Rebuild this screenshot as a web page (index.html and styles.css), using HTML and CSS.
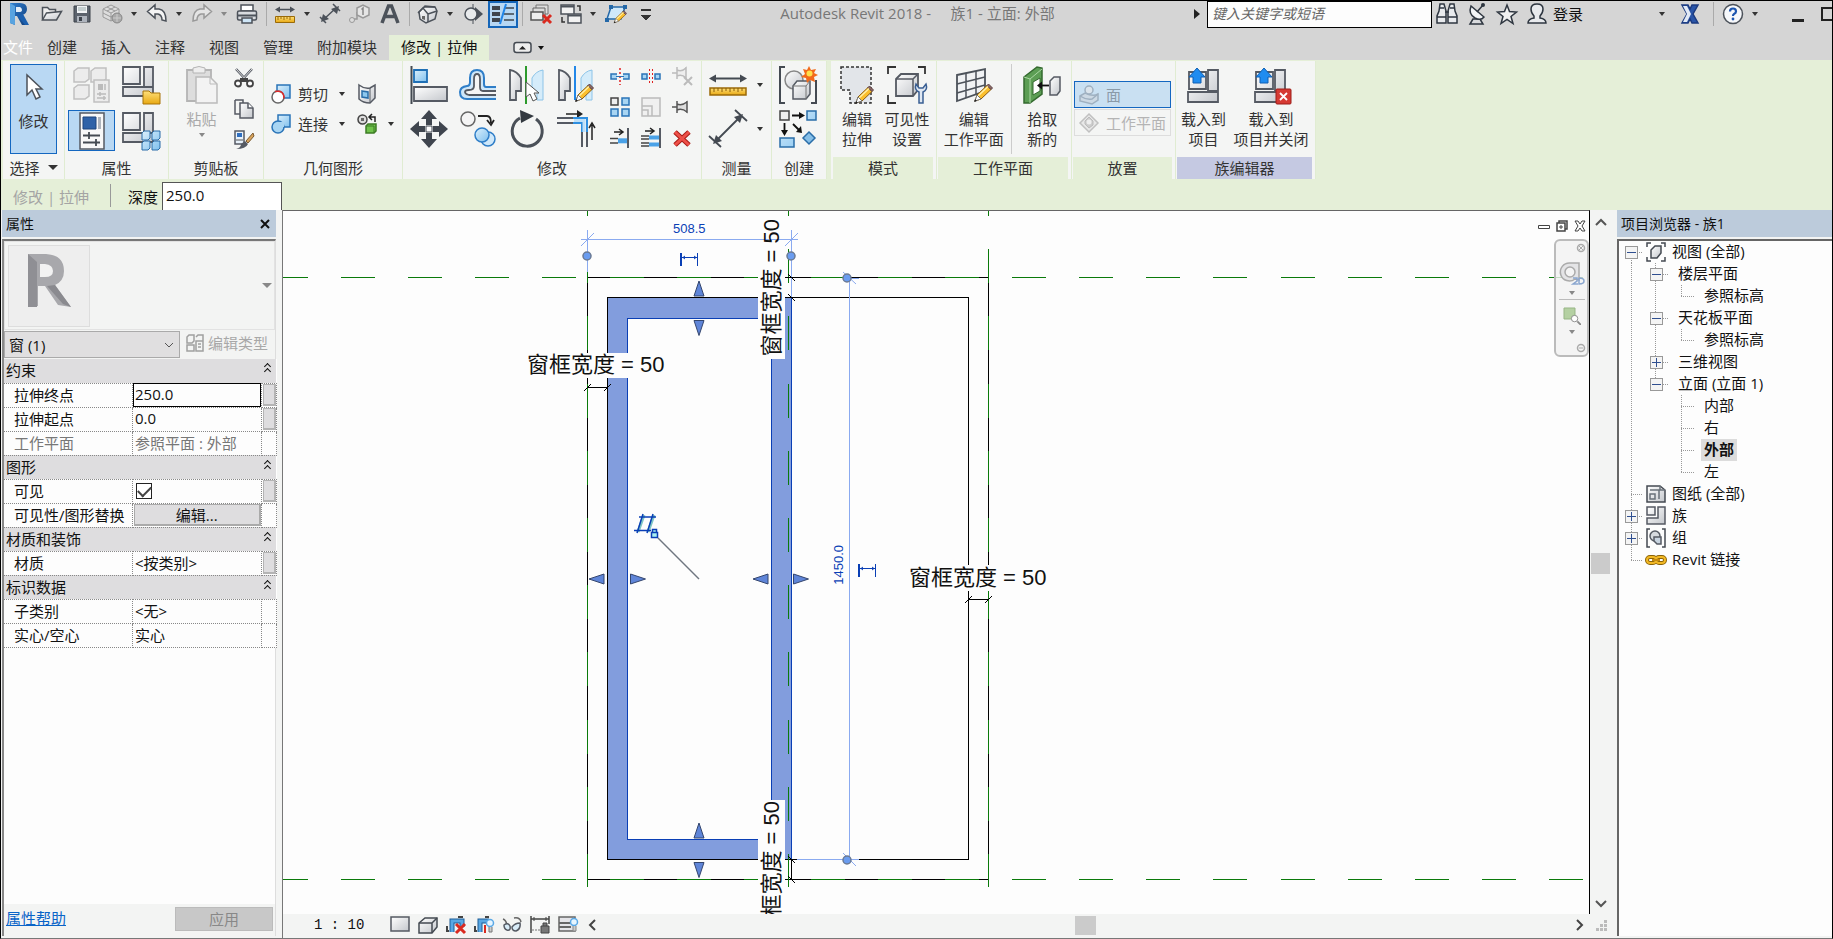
FILE: index.html
```html
<!DOCTYPE html>
<html lang="zh-CN">
<head>
<meta charset="utf-8">
<title>Autodesk Revit 2018 - 族1 - 立面: 外部</title>
<link rel="stylesheet" href="styles.css">
</head>
<body>
<svg class="defs" aria-hidden="true">
  <defs>
    <linearGradient id="metal" x1="0" y1="0" x2="1" y2="1"><stop offset="0" stop-color="#fff"/><stop offset="1" stop-color="#c4c7cc"/></linearGradient>
    <linearGradient id="sky" x1="0" y1="0" x2="1" y2="1"><stop offset="0" stop-color="#dcf0fc"/><stop offset="1" stop-color="#7fc0ee"/></linearGradient>
    <linearGradient id="gold" x1="0" y1="0" x2="0" y2="1"><stop offset="0" stop-color="#ffe07a"/><stop offset="1" stop-color="#e8a812"/></linearGradient>
    <linearGradient id="brand" x1="0" y1="0" x2="1" y2="1"><stop offset="0" stop-color="#2f7fd0"/><stop offset="1" stop-color="#123f7c"/></linearGradient>
    <symbol id="pencil" viewBox="0 0 20 20"><path d="M2 18l2-6L14 2.500l4 4L8 16z" fill="#fbbf2d" stroke="#8a5a10"/><path d="M14 2.500l1.500-1.500 4 4L18 6.500z" fill="#8d6a6a" stroke="#5b4040"/><path d="M5 13l10-9.500" stroke="#fff0a8" stroke-width="1.500"/><path d="M2 18l2-6 4 4z" fill="#fff" stroke="#777"/><path d="M1 19l3-1-2-2z" fill="#222"/></symbol>
    <symbol id="glass" viewBox="0 0 12 12"><circle cx="5" cy="5" r="3.500" fill="#fff" stroke="#888"/><path d="M8 8l4 4" stroke="#888" stroke-width="2"/></symbol>
  </defs>
</svg>

<header class="titlebar">
  <div class="quick">
    <button class="app" aria-label="Revit"><svg width="22" height="24" viewBox="0 0 22 24"><path d="M2 1h10q7 0 7 6 0 5-5 6l5 10h-5L9 14H7v9l-5-2z" fill="url(#brand)"/><path d="M2 1l5 3v19l-5-2z" fill="#58a3e0"/><path d="M8 5h4q2 1 2 3t-3 2H8z" fill="#e4eef8"/><path d="M9 13l8 10h4l-6-11z" fill="#1b5fae"/></svg></button>
    <button aria-label="打开"><svg width="22" height="22" viewBox="0 0 22 22"><path d="M1.500 17V4.500h5l2 2h6v3" fill="#eee" stroke="#4c525a" stroke-width="1.500"/><path d="M1.500 17l4-7 15-1.500-5 8.500z" fill="url(#metal)" stroke="#4c525a" stroke-width="1.500"/></svg></button>
    <button aria-label="保存"><svg width="22" height="22" viewBox="0 0 22 22"><path d="M3 3h16v16H3z" fill="#5b626c" stroke="#3d434b"/><path d="M6 3h10v7H6z" fill="#f2f4f6"/><path d="M7 5h8M7 7h8" stroke="#9aa"/><path d="M6 13h10v6H6z" fill="#aeb4bd"/><path d="M8 14h3v4H8z" fill="#3d434b"/></svg></button>
    <button aria-label="同步"><svg width="24" height="22" viewBox="0 0 24 22"><g fill="#ddd" stroke="#999"><path d="M3 6l8-4 8 4v8l-8 4-8-4z"/><path d="M3 6l8 4 8-4M11 10v8M7 4l8 4M15 4L7 8M3 10l8 4 8-4"/></g><circle cx="17" cy="15" r="5" fill="#aaa" stroke="#888"/><path d="M13 15h8M17 11v8" stroke="#ccc"/></svg></button>
    <i class="caret"></i>
    <button aria-label="放弃"><svg width="22" height="22" viewBox="0 0 22 22"><path d="M1.500 8.500L9 2v4h4q7 1 7 12l-4-1q0-5-4-6H9v4z" fill="#f4f4f4" stroke="#4c525a" stroke-width="1.500"/></svg></button>
    <i class="caret"></i>
    <button aria-label="重做"><svg width="22" height="22" viewBox="0 0 22 22"><path d="M20.500 8.500L13 2v4H9q-7 1-7 12l4-1q0-5 4-6h3v4z" fill="#e4e4e4" stroke="#999" stroke-width="1.500"/></svg></button>
    <i class="caret dim"></i>
    <button aria-label="打印"><svg width="22" height="22" viewBox="0 0 22 22"><path d="M5 2h12v6H5z" fill="#fff" stroke="#4c525a" stroke-width="1.500"/><rect x="1.500" y="8" width="19" height="9" rx="1.500" fill="#d8dbdf" stroke="#4c525a" stroke-width="1.500"/><path d="M2 12.500h18" stroke="#4c525a" stroke-width="2"/><path d="M6 15h10v5H6z" fill="#cfe6f7" stroke="#4c525a" stroke-width="1.500"/></svg></button>
    <i class="rule"></i>
    <button aria-label="测量"><svg width="22" height="22" viewBox="0 0 22 22"><path d="M3 6.500h16" stroke="#4c525a" stroke-width="1.500"/><path d="M1 6.500l5-3v6zM21 6.500l-5-3v6z" fill="#4c525a"/><path d="M1.500 13.500h19v6h-19z" fill="url(#gold)" stroke="#9a6a08"/><path d="M4 14v3m3-3v2m3-2v3m3-3v2m3-2v3" stroke="#9a6a08"/></svg></button>
    <i class="caret"></i>
    <button aria-label="对齐尺寸标注"><svg width="22" height="22" viewBox="0 0 22 22"><path d="M4 17L17 5M1 14l6 6M14 1l7 7" stroke="#4c525a" stroke-width="1.500"/><path d="M2 19l2-8 6 5zM20 3l-2 8-6-5z" fill="#4c525a"/></svg></button>
    <button aria-label="标记"><svg width="22" height="22" viewBox="0 0 22 22"><path d="M8 9v7H3" fill="none" stroke="#999" stroke-width="1.500"/><path d="M8 5l6-3 6 3v7l-6 3-6-3z" fill="#e6e6e6" stroke="#999" stroke-width="1.500"/><path d="M12.500 6.500L14 5v7" stroke="#888" stroke-width="1.500" fill="none"/><circle cx="3" cy="17" r="2.500" fill="#ddd" stroke="#999"/></svg></button>
    <button aria-label="文字"><svg width="22" height="22" viewBox="0 0 22 22"><path d="M3 20L9.500 3h3L19 20M6 13.500h10" fill="none" stroke="#4c525a" stroke-width="3.500"/></svg></button>
    <i class="rule"></i>
    <button aria-label="默认三维视图"><svg width="22" height="22" viewBox="0 0 22 22"><path d="M2 9l6-6 10 1 2 4-2 8-9 4-6-4z" fill="url(#metal)" stroke="#4c525a" stroke-width="1.500"/><path d="M1 10l5-5 5 6M11 11v8M11 11l9-3M7 4l11 0" fill="none" stroke="#4c525a" stroke-width="1.500"/><path d="M5 13h3v4l-3-1z" fill="#666"/></svg></button>
    <i class="caret"></i>
    <button aria-label="剖面"><svg width="22" height="22" viewBox="0 0 22 22"><path d="M13 4l8 7-8 7z" fill="#4c525a"/><path d="M11 1v20" stroke="#4c525a"/><circle cx="9" cy="11" r="6" fill="#e8eaec" stroke="#4c525a" stroke-width="1.500"/></svg></button>
    <button class="on" aria-label="细线" aria-pressed="true"><svg width="24" height="22" viewBox="0 0 24 22"><path d="M1 5h8M1 11h8M1 17h8" stroke="#3f454e" stroke-width="4"/><path d="M13 5h10M13 11h10M13 17h10" stroke="#3f454e" stroke-width="1.500"/><path d="M15 1L9 21" stroke="#1f84e8" stroke-width="2"/></svg></button>
    <i class="rule"></i>
    <button aria-label="关闭隐藏窗口"><svg width="22" height="22" viewBox="0 0 22 22"><path d="M6 2h12v9H6z" fill="#ddd" stroke="#777"/><path d="M3 5h12v9H3z" fill="#ddd" stroke="#666"/><path d="M1 9h12v8H1z" fill="#eee" stroke="#555" stroke-width="1.500"/><path d="M13 12l8 8m0-8l-8 8" stroke="#d92a20" stroke-width="3"/></svg></button>
    <button aria-label="切换窗口"><svg width="22" height="22" viewBox="0 0 22 22"><path d="M1 2h13v9H1zM8 11h13v9H8z" fill="#f2f2f2" stroke="#4c525a" stroke-width="1.500"/><path d="M1 3.500h13M8 12.500h13" stroke="#4c525a" stroke-width="2"/><path d="M17 3h3v5M5 19H2v-5" fill="none" stroke="#333" stroke-width="1.500"/></svg></button>
    <i class="caret"></i>
    <button aria-label="编辑边界"><svg width="22" height="22" viewBox="0 0 22 22"><path d="M6 4h14l-4 12H2z" fill="#cfe8fa" stroke="#2468a8" stroke-width="1.500"/><path d="M4 2h4v4H4zM18 2h4v4h-4zM0 15h4v4H0z" fill="#2468a8"/><use href="#pencil" x="8" y="7" width="14" height="14"/></svg></button>
    <button class="more" aria-label="自定义快速访问工具栏"></button>
  </div>
  <h1>Autodesk Revit 2018 - &nbsp;&nbsp;&nbsp; 族1 - 立面: 外部</h1>
  <div class="infocenter">
    <i class="play"></i>
    <input class="search" type="text" aria-label="搜索" placeholder="键入关键字或短语">
    <button aria-label="搜索"><svg width="22" height="24" viewBox="0 0 22 24"><path d="M3 9l1-7h4l2 7v12H1v-7zM19 9l-1-7h-4l-2 7v12h9v-7z" fill="#e8eaed" stroke="#2e3640" stroke-width="1.500"/><path d="M1 15h9M12 15h9M9 10h4M3 6h5M14 6h5" stroke="#2e3640" stroke-width="1.500"/></svg></button>
    <button aria-label="通讯中心"><svg width="18" height="24" viewBox="0 0 18 24"><path d="M5 17l-3 5h13l-3-5z" fill="#d8dadd" stroke="#2e3640" stroke-width="1.500"/><path d="M3 4q-3 8 4 12 6 3 9-1z" fill="#f2f4f6" stroke="#2e3640" stroke-width="1.500"/><path d="M9 10l6-7" stroke="#2e3640" stroke-width="1.500"/><circle cx="15" cy="3" r="2" fill="#2e3640"/></svg></button>
    <button aria-label="收藏夹"><svg width="22" height="22" viewBox="0 0 22 22"><path d="M11 2l2.500 6.500 7 .5-5.500 4.500 2 7L11 16.500 5 20.500l2-7L1.500 9l7-.5z" fill="#f0f0f0" stroke="#2e3640" stroke-width="1.500"/></svg></button>
    <button class="login"><svg width="22" height="24" viewBox="0 0 22 24"><path d="M2 21q0-4 6-5v-2Q5 11 5 7q0-5 6-5t6 5q0 4-3 7v2q6 1 6 5z" fill="#e8eaed" stroke="#2e3640" stroke-width="1.500"/></svg>登录</button>
    <i class="caret"></i>
    <button class="exchange" aria-label="Exchange"><svg width="20" height="22" viewBox="0 0 20 22"><path d="M18 2h-6l-2 4-2-4H2l5 9-5 9h6l2-4 2 4h6l-5-9z" fill="#2a55a8" stroke="#1c3b80" stroke-width="1.500"/><path d="M3 3h4l4 8-4 8H3l4-8z" fill="#e2eaf6"/></svg></button>
    <i class="rule"></i>
    <button aria-label="帮助"><svg width="22" height="22" viewBox="0 0 22 22"><circle cx="11" cy="11" r="9.500" fill="#f6f8fb" stroke="#4c525a" stroke-width="1.500"/><path d="M8 8.500q0-3 3-3t3 3q0 1.500-2 2.500-1 .5-1 2" fill="none" stroke="#1c55b0" stroke-width="2.200"/><circle cx="11" cy="16" r="1.400" fill="#1c55b0"/></svg></button>
    <i class="caret"></i>
    <button class="winmin" aria-label="最小化"></button>
    <button class="winmax" aria-label="最大化"></button>
  </div>
</header>

<nav class="tabs">
  <button class="file">文件</button>
  <button>创建</button><button>插入</button><button>注释</button><button>视图</button><button>管理</button><button>附加模块</button>
  <button class="active">修改 | 拉伸</button>
  <button class="minimize" aria-label="最小化功能区"><svg width="32" height="14" viewBox="0 0 32 14"><rect x="1" y="1.500" width="17" height="10" rx="2.500" fill="#eee" stroke="#444a52" stroke-width="1.500"/><path d="M6 8.500L9.500 5 13 8.500z" fill="#222"/><path d="M25 5h6l-3 4z" fill="#111"/></svg></button>
</nav>

<section class="ribbon">
  <div class="panel select">
    <div class="body">
      <button class="tall on"><svg width="20" height="28" viewBox="0 0 20 28"><path d="M3 2v20l5-5 4 9 4-2-4-8h6z" fill="#fff" stroke="#4c525a" stroke-width="1.500"/></svg><span>修改</span></button>
    </div>
    <h2>选择 <i class="caret wide"></i></h2>
  </div>
  <div class="panel props">
    <div class="body">
      <button aria-label="类型属性"><svg width="38" height="38" viewBox="0 0 38 38"><g fill="#ececec" stroke="#c0c0c0" stroke-width="1.500"><path d="M1 5l4-3h11v11l-4 3H1zM18 5l4-3h11v11l-4 3H18zM1 22l4-3h11v11l-4 3H1z"/><path d="M21 14h15v22H21z"/></g><path d="M25 18h5v6h-5z" fill="#bbb"/><path d="M32 18v6M24 28h9M24 32h9M27 26v4M31 30v4" stroke="#bbb" stroke-width="1.500"/></svg></button>
      <button aria-label="族类别和族参数"><svg width="38" height="38" viewBox="0 0 38 38"><path d="M1 1h17v17H1zM22 1h9v20H22zM1 21h30v9H1z" fill="url(#metal)" stroke="#555a63" stroke-width="1.800"/><path d="M21 25h6l2 2h9v11H21z" fill="url(#gold)" stroke="#a87508"/></svg></button>
      <button class="on" aria-label="属性" aria-pressed="true"><svg width="28" height="38" viewBox="0 0 28 38"><rect x="2" y="1" width="24" height="36" fill="#f8f8f8" stroke="#555a63" stroke-width="1.500"/><path d="M5 5h13v12H5z" fill="#2f62a8" stroke="#1e457c"/><path d="M20 5h3v12h-3z" fill="#aeb4bd"/><path d="M5 23.500h17M5 30.500h17M11 20v7M18 27v7" stroke="#444a52" stroke-width="1.800"/></svg></button>
      <button aria-label="族类型"><svg width="38" height="38" viewBox="0 0 38 38"><path d="M1 1h17v17H1zM22 1h9v20H22zM1 21h30v9H1z" fill="url(#metal)" stroke="#555a63" stroke-width="1.800"/><g fill="url(#sky)" stroke="#2a6da8"><path d="M20 21l2-2h6v7l-2 2h-6zM30 21l2-2h6v7l-2 2h-6zM20 31l2-2h6v7l-2 2h-6zM30 31l2-2h6v7l-2 2h-6z"/></g></svg></button>
    </div>
    <h2>属性</h2>
  </div>
  <div class="panel clip">
    <div class="body">
      <button class="tall off"><svg width="34" height="38" viewBox="0 0 34 38"><path d="M2 4h24v31H2z" fill="#ddd" stroke="#b4b4b4" stroke-width="1.800"/><path d="M8 2q6-3 12 0v5H8z" fill="#eee" stroke="#b4b4b4"/><path d="M11 11h14l7 7v19H11z" fill="#f3f3f3" stroke="#bbb" stroke-width="1.500"/><path d="M25 11v7h7" fill="none" stroke="#bbb"/></svg><span>粘贴</span><i class="caret"></i></button>
      <div class="stack">
        <button aria-label="剪切到剪贴板"><svg width="20" height="20" viewBox="0 0 20 20"><path d="M2 1l12 13M18 1L6 14" stroke="#555a63" stroke-width="2.500"/><path d="M2 1l12 13M18 1L6 14" stroke="#ddd"/><path d="M6 10h8v4H6z" fill="#444"/><circle cx="4" cy="15.500" r="3" fill="#fff" stroke="#444" stroke-width="1.800"/><circle cx="16" cy="15.500" r="3" fill="#fff" stroke="#444" stroke-width="1.800"/></svg></button>
        <button aria-label="复制到剪贴板"><svg width="20" height="20" viewBox="0 0 20 20"><path d="M1 1h8v4M1 1v14h5" fill="none" stroke="#555a63" stroke-width="1.500"/><path d="M6 4h8l5 5v10H6z" fill="url(#metal)" stroke="#555a63" stroke-width="1.500"/><path d="M14 4v5h5" fill="#fff" stroke="#555a63" stroke-width="1.500"/></svg></button>
        <button aria-label="匹配类型属性"><svg width="20" height="20" viewBox="0 0 20 20"><path d="M1 1h9v13H1z" fill="#e8f2fb" stroke="#555a63" stroke-width="1.500"/><path d="M3 3h5v4H3z" fill="#2f6fc0"/><path d="M2 10h7" stroke="#555"/><path d="M19 3l-7 8 2 2 6-7z" fill="#d8a35c" stroke="#7a5a30"/><path d="M11 11l3 3q-2 5-12 5 5-1 5-5z" fill="#555a63"/></svg></button>
      </div>
    </div>
    <h2>剪贴板</h2>
  </div>
  <div class="panel geom">
    <div class="body">
      <button><svg width="20" height="20" viewBox="0 0 20 20"><path d="M6 1h13v13H6z" fill="url(#sky)" stroke="#2a74b8" stroke-width="1.500"/><circle cx="7" cy="13" r="6" fill="#fff" stroke="#666" stroke-width="1.500"/><path d="M4 7.500q9-2 9 7" fill="none" stroke="#e02a2a" stroke-width="1.500"/></svg>剪切<i class="caret"></i></button>
      <button aria-label="连接端切割"><svg width="20" height="20" viewBox="0 0 20 20"><path d="M2 1q5 4 11 3l5-3v13l-5 5q-7 0-11-4z" fill="url(#metal)" stroke="#555a63" stroke-width="1.500"/><path d="M13 4v15" stroke="#555a63"/><path d="M5 7l6 1v6l-6-1z" fill="#8ec8ee" stroke="#2a6da8" stroke-width="1.500"/></svg></button>
      <button><svg width="20" height="20" viewBox="0 0 20 20"><path d="M7 1h12v12H7z" fill="url(#sky)" stroke="#2a74b8" stroke-width="1.500"/><circle cx="7" cy="13" r="6" fill="#a8d5f3" stroke="#2a74b8" stroke-width="1.500"/><path d="M8 8h5v5H8z" fill="#a8d5f3"/></svg>连接<i class="caret"></i></button>
      <button aria-label="填色"><svg width="20" height="20" viewBox="0 0 20 20"><circle cx="5.500" cy="5.500" r="4.500" fill="#ddd" stroke="#444" stroke-width="1.500"/><path d="M4 4h3v3H4z" fill="#666"/><path d="M13 3h5v5M15 0l-3 3 3 3" fill="none" stroke="#222" stroke-width="1.500"/><path d="M9 12l2-2h8v7l-2 2H9z" fill="#6fc24a" stroke="#3d7c24" stroke-width="1.500"/><path d="M9 12h8v7" fill="none" stroke="#3d7c24"/></svg><i class="caret"></i></button>
    </div>
    <h2>几何图形</h2>
  </div>
  <div class="panel modify">
    <div class="body">
      <div class="grid-big">
        <button aria-label="对齐"><svg width="38" height="38" viewBox="0 0 38 38"><path d="M1.500 0v38" stroke="#444a52" stroke-width="2"/><path d="M4 4h13v12H4z" fill="url(#sky)" stroke="#1f6fb5" stroke-width="1.800"/><path d="M4 21h33v14H4z" fill="url(#metal)" stroke="#555a63" stroke-width="1.800"/></svg></button>
        <button aria-label="偏移"><svg width="38" height="38" viewBox="0 0 38 38"><path d="M37 21H27q-2 0-2-3v-6q0-8-7-8t-7 8v4q0 4-3 4-7 1-7 6 0 7 7 7h29" fill="#cfe7f9" stroke="#2f7ec8" stroke-width="2"/><path d="M37 25H24q-3 0-3-4v-8q0-5-3-5t-3 5v7q0 4-5 4-4 0-4 2t4 3h27" fill="#f5f5f5" stroke="#555a63" stroke-width="1.800"/></svg></button>
        <button aria-label="镜像 - 拾取轴"><svg width="38" height="38" viewBox="0 0 38 38"><path d="M2 4q7 1 11 8v13H8v9H2z" fill="url(#metal)" stroke="#555a63" stroke-width="1.800"/><path d="M35 4q-7 1-11 8v13h5v9h6z" fill="#d5ecfa" stroke="#8cc4e8"/><path d="M18 0v38" stroke="#2c9a2c" stroke-width="2"/><path d="M18 16v15l4-3 3 7 4-2-3-6h5z" fill="#fff" stroke="#555"/></svg></button>
        <button aria-label="镜像 - 绘制轴"><svg width="38" height="38" viewBox="0 0 38 38"><path d="M2 4q7 1 11 8v13H8v9H2z" fill="url(#metal)" stroke="#555a63" stroke-width="1.800"/><path d="M35 4q-7 1-11 8v13h5v9h6z" fill="#d5ecfa" stroke="#8cc4e8"/><path d="M18 0v34" stroke="#2287e8" stroke-width="2"/><use href="#pencil" x="17" y="17" width="20" height="20"/></svg></button>
        <button aria-label="移动"><svg width="38" height="38" viewBox="0 0 38 38"><path d="M19 0l8 9h-5v6h-6V9h-5zM19 38l8-9h-5v-6h-6v6h-5zM0 19l9-8v5h6v6H9v5zM38 19l-9-8v5h-6v6h6v5z" fill="#3f454e"/><path d="M16 16h6v6h-6z" fill="#fff" stroke="#3f454e"/></svg></button>
        <button aria-label="复制"><svg width="38" height="38" viewBox="0 0 38 38"><circle cx="9" cy="9" r="7" fill="#f4f4f4" stroke="#666" stroke-width="1.500"/><path d="M19 6h9q4 0 4 7M28 10l4 5 3-5" fill="none" stroke="#222" stroke-width="1.800"/><circle cx="29" cy="29" r="7" fill="#cfe8fa" stroke="#2f7ec8" stroke-width="1.500"/><circle cx="23" cy="25" r="7" fill="url(#sky)" stroke="#2f7ec8" stroke-width="1.500"/></svg></button>
        <button aria-label="旋转"><svg width="38" height="38" viewBox="0 0 38 38"><path d="M12 8a15 15 0 1 0 16 1" fill="none" stroke="#4a5058" stroke-width="3"/><path d="M12 0l14 6-13 7z" fill="#333940"/></svg></button>
        <button aria-label="修剪/延伸为角"><svg width="38" height="38" viewBox="0 0 38 38"><path d="M0 8h16M0 13h16" stroke="#555a63" stroke-width="2"/><path d="M9 4h14" stroke="#222" stroke-width="1.500"/><path d="M20 0l6 4-6 4z" fill="#222"/><path d="M16 8h14v14M16 13h9v9" fill="none" stroke="#2f8fe0" stroke-width="2"/><path d="M17 10.500h10V22" fill="none" stroke="#bfe0f8" stroke-width="3"/><path d="M25 22v15M30 22v15" stroke="#555a63" stroke-width="2"/><path d="M35 15v15M32 18l3-5 3 5" stroke="#222" stroke-width="1.500" fill="none"/></svg></button>
      </div>
      <div class="grid-small">
        <button aria-label="拆分图元"><svg width="20" height="20" viewBox="0 0 20 20"><path d="M1 8h18v5H1z" fill="#a8d5f3" stroke="#2a74b8" stroke-width="1.500"/><path d="M7 5h6v11H7z" fill="#f5f5f5"/><path d="M10 2v17" stroke="#e02020" stroke-width="1.500" stroke-dasharray="2 2"/><path d="M6 10.500h8" stroke="#2a74b8"/></svg></button>
        <button aria-label="用间隙拆分"><svg width="20" height="20" viewBox="0 0 20 20"><path d="M1 8h5v5H1zM14 8h5v5h-5z" fill="#a8d5f3" stroke="#2a74b8" stroke-width="1.500"/><path d="M8.500 3v15M11.500 3v15" stroke="#e02020" stroke-dasharray="2 2"/></svg></button>
        <button aria-label="解锁"><svg width="20" height="20" viewBox="0 0 20 20"><path d="M0 7h5M5 1v12M5 4q5 2 9-2v10q-4-4-9-2M14 1v12" fill="#eee" stroke="#bbb" stroke-width="1.500"/><path d="M12 11l8 8m0-8l-8 8" stroke="#bbb" stroke-width="2"/></svg></button>
        <button aria-label="阵列"><svg width="20" height="20" viewBox="0 0 20 20"><path d="M1 1h7v7H1z" fill="#eee" stroke="#444" stroke-width="1.500"/><path d="M12 1h7v7h-7zM1 12h7v7H1zM12 12h7v7h-7z" fill="#a8d5f3" stroke="#2a74b8" stroke-width="1.500"/></svg></button>
        <button aria-label="缩放"><svg width="20" height="20" viewBox="0 0 20 20"><path d="M1 1h18v18H1z" fill="#f0f0f0" stroke="#bbb" stroke-width="1.500"/><path d="M1 9h10v10M1 13h6v6" fill="none" stroke="#bbb" stroke-width="1.500"/></svg></button>
        <button aria-label="锁定"><svg width="20" height="20" viewBox="0 0 20 20"><path d="M0 10h5" stroke="#555" stroke-width="1.500"/><path d="M5 4v12M5 7q5 2 10-2v10q-5-4-10-2M15 4v12" fill="#ddd" stroke="#555" stroke-width="1.500"/></svg></button>
        <button aria-label="修剪/延伸单个图元"><svg width="20" height="20" viewBox="0 0 20 20"><path d="M18 0v20" stroke="#555a63" stroke-width="2"/><path d="M4 4h8M9 1l4 3-4 3" stroke="#222" fill="none" stroke-width="1.500"/><path d="M0 10.500h8M0 15h8" stroke="#444" stroke-width="1.500"/><path d="M8 12.800h9" stroke="#4aa2e8" stroke-width="5"/></svg></button>
        <button aria-label="修剪/延伸多个图元"><svg width="20" height="20" viewBox="0 0 20 20"><path d="M19 0v20" stroke="#555a63" stroke-width="2"/><path d="M4 3h8M9 0l4 3-4 3" stroke="#222" fill="none" stroke-width="1.500"/><path d="M0 8h8M0 11h8M0 15h8M0 18h8" stroke="#444" stroke-width="1.500"/><path d="M8 9.500h10M8 16.500h10" stroke="#4aa2e8" stroke-width="4"/></svg></button>
        <button aria-label="删除"><svg width="20" height="20" viewBox="0 0 20 20"><path d="M3 4l14 13M17 4L3 17" stroke="#a81c16" stroke-width="5"/><path d="M3 4l14 13M17 4L3 17" stroke="#ee5048" stroke-width="3"/></svg></button>
      </div>
    </div>
    <h2>修改</h2>
  </div>
  <div class="panel measure">
    <div class="body">
      <button aria-label="测量"><svg width="38" height="38" viewBox="0 0 38 38"><path d="M3 12.500h32" stroke="#444a52" stroke-width="2"/><path d="M0 12.500l7-4v8zM38 12.500l-7-4v8z" fill="#444a52"/><path d="M1 22h36v7H1z" fill="url(#gold)" stroke="#9a6a08" stroke-width="1.500"/><path d="M5 22v4m4-4v3m4-3v4m4-4v3m4-3v4m4-4v3m4-3v4m4-4v3" stroke="#8a5c08"/></svg><i class="caret"></i></button>
      <button aria-label="对齐尺寸标注"><svg width="38" height="38" viewBox="0 0 38 38"><path d="M6 32L32 6M0 26l12 11M26 0l12 11" stroke="#444a52" stroke-width="1.800"/><path d="M4 34l3-9 6 6zM34 4l-3 9-6-6z" fill="#444a52"/></svg><i class="caret"></i></button>
    </div>
    <h2>测量</h2>
  </div>
  <div class="panel create">
    <div class="body">
      <button aria-label="创建组"><svg width="38" height="38" viewBox="0 0 38 38"><path d="M6 1H1v36h5M32 37h5V14" fill="none" stroke="#444a52" stroke-width="2"/><circle cx="15" cy="14" r="9" fill="url(#metal)" stroke="#888" stroke-width="1.500"/><path d="M14 20l4-5h13v13l-4 5H14z" fill="url(#metal)" stroke="#555a63" stroke-width="1.500"/><path d="M14 20h13v13M27 20l4-5" fill="none" stroke="#777"/><path d="M30 0l2 4 5-1-2 4 4 2-4 2 1 5-5-2-3 3-1-5-5-1 4-3-2-5 4 1z" fill="#f26a1b"/><circle cx="30.500" cy="7.500" r="3" fill="#ffe04a"/></svg></button>
      <button aria-label="创建类似实例"><svg width="38" height="38" viewBox="0 0 38 38"><path d="M1 1h9v9H1z" fill="#eee" stroke="#444" stroke-width="1.500"/><path d="M28 1h9v9h-9zM1 28h14v9H1z" fill="url(#sky)" stroke="#2a6da8" stroke-width="1.500"/><path d="M30 22l6 6-6 6-6-6z" fill="#86bfe8" stroke="#2a6da8" stroke-width="1.500"/><path d="M13 5.500h9M5.500 13v9M14 14l6 6" stroke="#111" stroke-width="1.800"/><path d="M20 2l6 3.500L20 9zM2 20l3.500 6L9 20zM17 22l6 1-1-7z" fill="#111"/></svg></button>
    </div>
    <h2>创建</h2>
  </div>
  <div class="panel ctx mode">
    <div class="body">
      <button class="tall"><svg width="38" height="38" viewBox="0 0 38 38"><path d="M3 1h30v36H12V24H3z" fill="#e2e5e9" stroke="#333" stroke-width="1.500" stroke-dasharray="3 2"/><use href="#pencil" x="16" y="19" width="20" height="20"/></svg><span>编辑<br>拉伸</span></button>
      <button class="tall"><svg width="38" height="38" viewBox="0 0 38 38"><path d="M0 8V1h8M30 1h7v7M8 37H0v-8" fill="none" stroke="#333" stroke-width="1.800"/><path d="M8 13l5-5h17v16l-5 6H8z" fill="url(#metal)" stroke="#555a63" stroke-width="1.800"/><path d="M8 13h17v17M25 13l5-5" fill="none" stroke="#555a63" stroke-width="1.500"/><path d="M28 18q-2 6 3 8v11h4V26q5-2 3-8l-3 4h-4z" fill="#dfe7f2" stroke="#3a5f93" stroke-width="1.500"/></svg><span>可见性<br>设置</span></button>
    </div>
    <h2>模式</h2>
  </div>
  <div class="panel ctx plane">
    <div class="body">
      <button class="tall"><svg width="38" height="38" viewBox="0 0 38 38"><path d="M2 9l28-6v22L2 35z" fill="#f0f2f4" stroke="#4c525a" stroke-width="1.800"/><path d="M2 18l28-7M2 27l28-8M11 7v25M21 5v23" stroke="#4c525a" stroke-width="1.500"/><use href="#pencil" x="18" y="17" width="20" height="20"/></svg><span>编辑<br>工作平面</span></button>
      <i class="rule"></i>
      <button class="tall"><svg width="38" height="38" viewBox="0 0 38 38"><path d="M1 11L14 1l5 1v26L7 37H1z" fill="#5c9e54" stroke="#33692e" stroke-width="1.500"/><path d="M7 13L19 3M7 13v24M1 11l6 2" stroke="#a9d6a2" fill="none"/><path d="M10 16l7-4v13l-7 4z" fill="#fff" stroke="#33692e"/><path d="M18 19.500h8" stroke="#111" stroke-width="1.800"/><path d="M14 19.500l5-4v8z" fill="#111"/><path d="M27 15l4-4h6v14l-3 4h-7z" fill="url(#metal)" stroke="#555a63" stroke-width="1.500"/></svg><span>拾取<br>新的</span></button>
    </div>
    <h2>工作平面</h2>
  </div>
  <div class="panel ctx place">
    <div class="body">
      <button class="on"><svg width="20" height="20" viewBox="0 0 20 20"><path d="M1 11l5-3q8 4 13 1v6l-6 4-12-3z" fill="#cdd9e4" stroke="#9fb0c0" stroke-width="1.500"/><circle cx="10" cy="5" r="4" fill="#dbe4ec" stroke="#9fb0c0" stroke-width="1.500"/><path d="M1 11q6 4 12 3l6-5" fill="none" stroke="#9fb0c0" stroke-width="1.500"/></svg>面</button>
      <button><svg width="20" height="20" viewBox="0 0 20 20"><path d="M10 1l9 9-9 9-9-9z" fill="#e8e8e8" stroke="#c0c0c0" stroke-width="1.500"/><path d="M10 4l4 4v4l-4 3-4-4V8z" fill="#ccc" stroke="#bbb"/><circle cx="10" cy="9" r="2.500" fill="#eee"/></svg>工作平面</button>
    </div>
    <h2>放置</h2>
  </div>
  <div class="panel ctx family">
    <div class="body">
      <button class="tall"><svg width="38" height="38" viewBox="0 0 38 38"><path d="M4 6h17v17H4zM23 4h10v21H23zM3 26h30v10H3z" fill="url(#metal)" stroke="#555a63" stroke-width="1.800"/><path d="M12 2l8 9h-4v6H8v-6H4z" fill="#1f8cf0" stroke="#0f5fb4"/></svg><span>载入到<br>项目</span></button>
      <button class="tall"><svg width="38" height="38" viewBox="0 0 38 38"><path d="M4 6h17v17H4zM23 4h10v21H23zM3 26h30v10H3z" fill="url(#metal)" stroke="#555a63" stroke-width="1.800"/><path d="M12 2l8 9h-4v6H8v-6H4z" fill="#1f8cf0" stroke="#0f5fb4"/><rect x="24" y="23" width="15" height="15" rx="1" fill="#d63a33" stroke="#9c1c18"/><path d="M28 27l7 7m0-7l-7 7" stroke="#fff" stroke-width="1.800"/></svg><span>载入到<br>项目并关闭</span></button>
    </div>
    <h2>族编辑器</h2>
  </div>
</section>

<section class="options">
  <span class="context">修改 | 拉伸</span>
  <label for="depth">深度</label>
  <input id="depth" type="text" value="250.0">
</section>

<main class="workspace">
  <aside class="properties">
    <div class="palette-head"><h2>属性</h2><button aria-label="关闭"><svg width="12" height="12" viewBox="0 0 12 12"><path d="M2 2l8 8M10 2l-8 8" stroke="#111" stroke-width="2"/></svg></button></div>
    <div class="palette-box">
      <div class="type">
        <div class="thumb"><svg width="48" height="56" viewBox="0 0 48 56"><path d="M3 1h18q18 1 18 17 0 10-9 14l16 22-13-2-13-19h-7v20L3 54z" fill="#a8a8ac"/><path d="M3 1l9 8v45H3z" fill="#8f8f94"/><path d="M15 11h5q8 1 8 7t-8 6h-5z" fill="#f2f2f2"/><path d="M22 33l8-1 16 22-8-3z" fill="#8a8a8f"/></svg></div>
        <i class="caret wide dim"></i>
      </div>
      <div class="filter">
        <select aria-label="类型过滤器"><option>窗 (1)</option></select>
        <button disabled><svg width="18" height="18" viewBox="0 0 18 18"><path d="M1 3l2-2h5v6L6 9H1zM10 3l2-2h5v6M1 11h7v6H1zM10 7h7v10h-7zM12 13h3M12 10h3" fill="none" stroke="#a0a0a0" stroke-width="1.500"/></svg>编辑类型</button>
      </div>
      <table>
        <tbody>
          <tr class="group"><th colspan="2" scope="rowgroup">约束</th><td><i class="fold"></i></td></tr>
          <tr><th scope="row"><label for="p1">拉伸终点</label></th><td class="focus"><input id="p1" value="250.0"></td><td><button aria-label="关联"></button></td></tr>
          <tr><th scope="row"><label for="p2">拉伸起点</label></th><td><input id="p2" value="0.0"></td><td><button aria-label="关联"></button></td></tr>
          <tr class="readonly"><th scope="row">工作平面</th><td>参照平面 : 外部</td><td></td></tr>
          <tr class="group"><th colspan="2" scope="rowgroup">图形</th><td><i class="fold"></i></td></tr>
          <tr><th scope="row"><label for="p3">可见</label></th><td><input id="p3" type="checkbox" checked></td><td><button aria-label="关联"></button></td></tr>
          <tr><th scope="row">可见性/图形替换</th><td class="edit"><button>编辑...</button></td><td></td></tr>
          <tr class="group"><th colspan="2" scope="rowgroup">材质和装饰</th><td><i class="fold"></i></td></tr>
          <tr><th scope="row">材质</th><td>&lt;按类别&gt;</td><td><button aria-label="关联"></button></td></tr>
          <tr class="group"><th colspan="2" scope="rowgroup">标识数据</th><td><i class="fold"></i></td></tr>
          <tr><th scope="row">子类别</th><td>&lt;无&gt;</td><td></td></tr>
          <tr><th scope="row">实心/空心</th><td>实心</td><td></td></tr>
        </tbody>
      </table>
      <div class="blank"></div>
      <div class="actions"><a href="#help">属性帮助</a><button disabled>应用</button></div>
    </div>
  </aside>

  <section class="view">
    <div class="stage">
      <svg class="drawing" role="img" aria-label="窗立面">
        <g transform="translate(-283 -211)" fill="none" shape-rendering="crispEdges">
          <path d="M587.500 277V879M988.500 277V879M587 277.500H989M587 879.500H989" stroke="#000"/>
          <path d="M607.500 297.500H968.500V859.500H607.500z" stroke="#000"/>
          <path d="M608 298H791V859H608zM627 318V840H771V318z" fill="#829ddd" fill-rule="evenodd"/>
          <path d="M627.500 318.500H771.500V839.500H627.500zM791.500 298V859" stroke="#0a3fb5"/>
          <path d="M587.500 182V887M788.500 182V887M988.500 182V887" stroke="#0a7a0a" stroke-dasharray="34 33.200"/>
          <path d="M274 277.500H1590M274 879.500H1590" stroke="#0a7a0a" stroke-dasharray="34 33.100"/>
          <g fill="#fdfdfd"><path d="M758 220h27v139h-27zM758 800h27v120h-27zM524 353h145v25H524zM907 565h145v26H907z"/></g>
        </g>
        <g transform="translate(-283 -211)" fill="none">
          <g stroke="#8aaaf0"><path d="M581 239.500H798M587.500 230V272M791.500 230V297M581 246l13-13M785 246l13-13M849.500 275V860M843 272l13 12M843 853l13 13M844 278.500h15M797 859.500h62"/></g>
          <g stroke="#000"><path d="M587 387.500h21M584 391l7-7M604 391l7-7M968 599.500h21M965 603l7-7M985 603l7-7M788 274l7 7M788 294l7 7M785 277.500h10M791.500 859v20M788 856l7 7M788 876l7 7"/></g>
          <g fill="#6a9cf0" stroke="#6b7a94" stroke-width="1.500"><circle cx="587" cy="256" r="4"/><circle cx="791" cy="256" r="4"/><circle cx="847" cy="278" r="4"/><circle cx="847" cy="860" r="4"/></g>
          <g fill="#5f85d8" stroke="#34466e"><path d="M699 281l5 15h-10zM694 320.500h10l-5 15zM699 823l5 15h-10zM694 862.500h10l-5 15zM589 579l15-5v10zM630.500 574v10l15-5zM753 579l15-5v10zM793.500 574v10l15-5z"/></g>
          <g stroke="#0a3fb5"><path d="M681 253v13M859 564v13" stroke-width="2"/><path d="M697.500 253v13M681 257.500h16M875.500 564v13M859 568.500h16M685 256l-2 1.500 2 1.500M694 256l2 1.500-2 1.500M863 567l-2 1.500 2 1.500M872 567l2 1.500-2 1.500"/></g>
          <path d="M638 532l6-17M648 532l6-17" stroke="#7cc4c4" stroke-width="3"/>
          <path d="M637 533l6-19M647 533l6-19M639 517h17M634 530.500h17" stroke="#0a3fb5" stroke-width="1.500"/>
          <path d="M651.500 532.500h6v5h-6zM652.500 532v-2.500h4v2.500" fill="#a8f0f0" stroke="#0a3fb5" stroke-width="1.500"/>
          <path d="M658 538l41 41" stroke="#6f7680" stroke-width="1.500"/>
          <g class="tag"><text x="527" y="372">窗框宽度 = 50</text><text x="909" y="585">窗框宽度 = 50</text><text transform="translate(779 219) rotate(-90)" text-anchor="end">窗框宽度 = 50</text><text transform="translate(779 801) rotate(-90)" text-anchor="end">窗框宽度 = 50</text></g>
          <g class="dim"><text x="673" y="233">508.5</text><text transform="translate(843 545) rotate(-90)" text-anchor="end">1450.0</text></g>
        </g>
      </svg>
      <div class="doc-controls">
        <button aria-label="最小化视图"><svg width="12" height="12" viewBox="0 0 12 12"><path d="M.5 5.500h11v3H.5z" fill="#fff" stroke="#444"/></svg></button>
        <button aria-label="还原视图"><svg width="12" height="12" viewBox="0 0 12 12"><path d="M3 3V1h8v8H9" fill="none" stroke="#444" stroke-width="1.500"/><path d="M1 3h8v8H1z" fill="#fff" stroke="#444" stroke-width="1.500"/><path d="M4 6h2v2H4z" stroke="#444" fill="none"/></svg></button>
        <button aria-label="关闭视图"><svg width="12" height="12" viewBox="0 0 12 12"><path d="M1 1h3l2 3 2-3h3L8 6l3 5H8L6 8l-2 3H1l3-5z" fill="#fff" stroke="#444"/></svg></button>
      </div>
      <div class="navbar">
        <svg class="end" width="10" height="10" viewBox="0 0 10 10"><circle cx="5" cy="5" r="3.500" fill="none" stroke="#aaa" stroke-width="1.500"/><path d="M3 3l4 4M7 3L3 7" stroke="#aaa"/></svg>
        <button aria-label="二维控制盘"><svg width="26" height="26" viewBox="0 0 26 26"><path d="M20 20V3h-9a9 9 0 1 0 5 16z" fill="#e4e4e6" stroke="#aaa" stroke-width="1.500"/><circle cx="11" cy="12" r="5" fill="#f4f4f4" stroke="#aaa" stroke-width="1.500"/><path d="M14 18h4v3l-4 3h5M20 18v6q5 0 5-3t-5-3" fill="none" stroke="#8aa6cf" stroke-width="1.500"/></svg></button>
        <i class="caret dim"></i>
        <hr>
        <button aria-label="区域放大"><svg width="18" height="18" viewBox="0 0 18 18"><path d="M1 1h11v11H1z" fill="#b4d0a2" stroke="#97b585"/><use href="#glass" x="7" y="7" width="11" height="11"/></svg></button>
        <i class="caret dim"></i>
        <svg class="end" width="10" height="10" viewBox="0 0 10 10"><circle cx="5" cy="5" r="3.500" fill="none" stroke="#aaa" stroke-width="1.500"/><path d="M3 5h4" stroke="#aaa"/></svg>
      </div>
    </div>
    <div class="vscroll">
      <svg width="12" height="8" viewBox="0 0 12 8"><path d="M1 7l5-5 5 5" fill="none" stroke="#555" stroke-width="2"/></svg>
      <span class="before"></span><span class="grab"></span><span class="after"></span>
      <svg width="12" height="8" viewBox="0 0 12 8"><path d="M1 1l5 5 5-5" fill="none" stroke="#555" stroke-width="2"/></svg>
    </div>
    <div class="viewbar">
      <span class="scale">1 : 10</span>
      <button aria-label="详细程度"><svg width="20" height="20" viewBox="0 0 20 20"><path d="M1 2h18v14H1z" fill="url(#metal)" stroke="#555a63" stroke-width="1.500"/></svg></button>
      <button aria-label="视觉样式"><svg width="20" height="20" viewBox="0 0 20 20"><path d="M1 8l6-5h12v9l-5 6H1z" fill="url(#metal)" stroke="#444a52" stroke-width="1.500"/><path d="M1 8h13v10M14 8l5-5" fill="none" stroke="#444a52" stroke-width="1.500"/></svg></button>
      <button aria-label="不裁剪视图"><svg width="20" height="20" viewBox="0 0 20 20"><path d="M6 17V6h10v6" fill="none" stroke="#1d5c98" stroke-width="5"/><path d="M6 17V6h10v6" fill="none" stroke="#58a8e4" stroke-width="3"/><path d="M1 11v6M12 2h5M0 16h3" stroke="#444" stroke-width="2"/><path d="M10 9l9 9m0-9l-9 9" stroke="#d92a20" stroke-width="3"/></svg></button>
      <button aria-label="显示裁剪区域"><svg width="20" height="20" viewBox="0 0 20 20"><path d="M6 17V6h9" fill="none" stroke="#1d5c98" stroke-width="5"/><path d="M6 17V6h9" fill="none" stroke="#58a8e4" stroke-width="3"/><path d="M1 11v6M0 16h3M11 2h4" stroke="#444" stroke-width="2"/><path d="M11 10v8" stroke="#d92a20" stroke-width="2"/><circle cx="16" cy="8" r="3.500" fill="#e6f5ff" stroke="#5aa8e6" stroke-width="1.500"/><path d="M15 12v5h3v-5" fill="#ccc" stroke="#777"/></svg></button>
      <button aria-label="临时隐藏/隔离"><svg width="20" height="20" viewBox="0 0 20 20"><path d="M1 4q3 1 4 6M12 3q6-1 7 4" fill="none" stroke="#666" stroke-width="1.500"/><path d="M2 10q4-3 6 1 1 5-3 4-3-1-3-5zM10 12q3-4 8-4 1 6-4 8-4 0-4-4z" fill="#d8ecf8" stroke="#555a63" stroke-width="1.500"/></svg></button>
      <button aria-label="显示约束"><svg width="20" height="20" viewBox="0 0 20 20"><path d="M1 1v17M19 1v8M1 4h18" stroke="#444" stroke-width="1.500"/><path d="M4 2v4M16 2v4" stroke="#444"/><path d="M2 15h9" stroke="#777" stroke-dasharray="2 1"/><path d="M11 11h8v7h-8zM13 11V8h4v3" fill="#777" stroke="#444"/></svg></button>
      <button aria-label="显示隐藏的图元"><svg width="20" height="20" viewBox="0 0 20 20"><path d="M1 2h16v14H1z" fill="#e4e4e8" stroke="#666" stroke-width="1.500"/><path d="M1 8h13M1 12h12" stroke="#666" stroke-width="2"/><circle cx="16" cy="7" r="3.500" fill="#e6f5ff" stroke="#5aa8e6" stroke-width="1.500"/><path d="M15 11v5h3v-5" fill="#ccc" stroke="#888"/></svg></button>
      <svg class="chev" width="8" height="12" viewBox="0 0 8 12"><path d="M7 1L2 6l5 5" fill="none" stroke="#444" stroke-width="2"/></svg>
      <div class="hscroll"><span class="before"></span><span class="grab"></span><span class="after"></span></div>
      <svg class="chev" width="8" height="12" viewBox="0 0 8 12"><path d="M1 1l5 5-5 5" fill="none" stroke="#444" stroke-width="2"/></svg>
    </div>
    <div class="grip"><svg width="12" height="12" viewBox="0 0 12 12"><path d="M9 0h3v3H9zM9 4h3v3H9zM5 4h3v3H5zM9 8h3v3H9zM5 8h3v3H5zM1 8h3v3H1z" fill="#bbb"/></svg></div>
  </section>

  <aside class="browser">
    <div class="palette-head"><h2>项目浏览器 - 族1</h2></div>
    <ul class="tree">
      <li><i class="c0 down dash"><b class="minus"></b></i><i class="c1 icon"><svg width="20" height="20" viewBox="0 0 20 20"><path d="M1 5V1h4M15 1h4v4M1 15v4h4M15 19h4v-4" fill="none" stroke="#444a52" stroke-width="1.500"/><path d="M5 8l4-4h6v7l-4 5H5z" fill="url(#metal)" stroke="#444a52" stroke-width="1.500"/></svg></i><span>视图 (全部)</span></li>
      <li><i class="c0 line"></i><i class="c1 line dash"><b class="minus"></b></i><span class="branch">楼层平面</span></li>
      <li><i class="c0 line"></i><i class="c1 line"></i><i class="c2 up dash"></i><span class="leaf">参照标高</span></li>
      <li><i class="c0 line"></i><i class="c1 line dash"><b class="minus"></b></i><span class="branch">天花板平面</span></li>
      <li><i class="c0 line"></i><i class="c1 line"></i><i class="c2 up dash"></i><span class="leaf">参照标高</span></li>
      <li><i class="c0 line"></i><i class="c1 line dash"><b class="plus"></b></i><span class="branch">三维视图</span></li>
      <li><i class="c0 line"></i><i class="c1 up dash"><b class="minus"></b></i><span class="branch">立面 (立面 1)</span></li>
      <li><i class="c0 line"></i><i class="c1"></i><i class="c2 line dash"></i><span class="leaf">内部</span></li>
      <li><i class="c0 line"></i><i class="c1"></i><i class="c2 line dash"></i><span class="leaf">右</span></li>
      <li><i class="c0 line"></i><i class="c1"></i><i class="c2 line dash"></i><span class="leaf current">外部</span></li>
      <li><i class="c0 line"></i><i class="c1"></i><i class="c2 up dash"></i><span class="leaf">左</span></li>
      <li><i class="c0 line dash"></i><i class="c1 icon"><svg width="20" height="20" viewBox="0 0 20 20"><path d="M1 2h13l5 4v12H1z" fill="url(#metal)" stroke="#444a52" stroke-width="1.500"/><path d="M4 6h9v9M4 10h5v5H4zM14 2v4h5" fill="none" stroke="#6a717a" stroke-width="1.500"/></svg></i><span>图纸 (全部)</span></li>
      <li><i class="c0 line dash"><b class="plus"></b></i><i class="c1 icon"><svg width="20" height="20" viewBox="0 0 20 20"><path d="M1 1h8v8H1zM12 1h7v17H1v-6h11z" fill="url(#metal)" stroke="#555a63" stroke-width="1.500"/></svg></i><span>族</span></li>
      <li><i class="c0 line dash"><b class="plus"></b></i><i class="c1 icon"><svg width="20" height="20" viewBox="0 0 20 20"><path d="M4 1H1v18h3M16 1h3v18h-3" fill="none" stroke="#444a52" stroke-width="1.500"/><circle cx="9" cy="8" r="5" fill="#d6dade" stroke="#555a63" stroke-width="1.500"/><path d="M8 9h7v7h-4l-3-3z" fill="#c8d4e0" stroke="#555a63" stroke-width="1.500"/></svg></i><span>组</span></li>
      <li><i class="c0 up dash"></i><i class="c1 icon"><svg width="20" height="20" viewBox="0 0 20 20"><rect x="1" y="7" width="9" height="6" rx="3" fill="none" stroke="#8a6208" stroke-width="4"/><rect x="10" y="7" width="9" height="6" rx="3" fill="none" stroke="#8a6208" stroke-width="4"/><rect x="1" y="7" width="9" height="6" rx="3" fill="none" stroke="#f2b824" stroke-width="2"/><rect x="10" y="7" width="9" height="6" rx="3" fill="none" stroke="#f2b824" stroke-width="2"/><path d="M6 10h8" stroke="#c68a10" stroke-width="2"/></svg></i><span>Revit 链接</span></li>
    </ul>
  </aside>
</main>
</body>
</html>
```

FILE: styles.css
```css
* { box-sizing: border-box; }

body {
  margin: 0;
  height: 100vh;
  display: flex;
  flex-direction: column;
  overflow: hidden;
  border: 1px solid #000;
  border-bottom-color: #777;
  background: #f3f4f3;
  color: #111;
  font: 15px/20px "Open Sans", "Noto Sans CJK SC", sans-serif;
}

h1, h2, ul, hr { margin: 0; padding: 0; font: inherit; }

button, input, select { font: inherit; color: inherit; margin: 0; }

button {
  display: flex;
  align-items: center;
  justify-content: center;
  padding: 0;
  border: 0;
  background: none;
}

svg { display: block; flex: none; overflow: visible; }

.defs { width: 0; height: 0; position: absolute; }

.caret {
  flex: none;
  width: 0;
  height: 0;
  border: 3px solid transparent;
  border-top: 4px solid #333;
  border-bottom: 0;
}
.caret.wide { border-width: 5px 5px 0; }
.caret.dim { border-top-color: #888; }

/* Title bar */
.titlebar { display: flex; flex: none; height: 34px; background: #d5d5d5; }

.quick, .infocenter { display: flex; align-items: center; height: 26px; }
.quick { padding-left: 1px; }
.quick button { width: 30px; height: 26px; }
.quick .app { width: 34px; margin-right: 1px; }
.quick .caret, .infocenter .caret { margin: 0 5px 0 4px; }
.quick .on { height: 27px; background: #b7d7f3; border: 2px solid #1565b8; }
.rule { width: 1px; height: 24px; margin: 0 4px; background: #aaa; }
.quick .rule { margin: 0 3px 0 4px; }

.more::before { content: ""; width: 10px; height: 9px; border-top: 2px solid #333; background: conic-gradient(from -45deg at 50% 100%, #333 90deg, transparent 0) 0 100% / 10px 5px no-repeat; }

.titlebar h1 { flex: 1; padding-right: 20px; line-height: 24px; text-align: center; color: #777; white-space: pre; }

.play { border: 5px solid transparent; border-left: 6px solid #222; border-right: 0; margin-right: 7px; }
.search {
  width: 225px;
  height: 27px;
  padding: 0 4px 2px;
  border: 1px solid #000;
  background: #fdfdfd;
  font-size: 14px;
  font-style: italic;
}
.search::placeholder { color: #666; opacity: 1; }
.infocenter button { width: 30px; }
.infocenter .login { width: auto; gap: 5px; padding: 0 72px 0 4px; }
.infocenter .exchange { width: 39px; }
.infocenter .winmin { width: 12px; height: 3px; margin: 12px 17px 0 29px; background: #222; }
.infocenter .winmax { width: 11px; height: 14px; border: 2px solid #222; border-right: 0; }

/* Tabs */
.tabs { display: flex; flex: none; height: 25px; background: #d5d5d5; }
.tabs button { padding: 0 12px 2px; color: #333; }
.tabs .file { padding: 0 2px 2px; color: #fff; }
.tabs .active { padding: 0 12px 2px; background: #e5efd8; color: #111; }
.tabs .minimize { padding: 0 24px; }

/* Ribbon */
.ribbon { display: flex; flex: none; padding: 1px 0 0 2px; height: 120px; background: #e5efd8; }
.panel { display: flex; flex-direction: column; flex: none; height: 118px; border-right: 1px solid #e0ecd2; background: #f4f5f4; color: #333; }
.panel .body { flex: 1; display: flex; align-items: flex-start; padding-top: 3px; }
.panel h2 { display: flex; align-items: center; justify-content: center; gap: 8px; height: 22px; padding-bottom: 1px; }
.panel .on { background: #b9d8f3; border: 1px solid #1467c0; }

.tall { flex-direction: column; justify-content: flex-start; padding-top: 2px; height: 90px; }
.tall svg { margin-bottom: 5px; }
.tall.off { color: #aaa; }

.select { width: 62px; }
.select .tall { width: 47px; margin-left: 7px; padding-top: 8px; }
.select .tall svg { margin-bottom: 10px; }

.props { width: 104px; }
.props .body { display: grid; grid-template-columns: 47px 47px; gap: 5px 2px; align-content: start; padding-left: 3px; }
.props button { height: 41px; }

.clip { width: 95px; }
.clip .tall { width: 65px; }
.clip .caret { margin-top: 4px; border-top-color: #888; }
.stack { display: grid; gap: 11px; padding-top: 4px; }

.geom { width: 139px; }
.geom .body { display: grid; grid-template-columns: 86px 34px; gap: 10px 0; align-content: start; padding: 23px 0 0 7px; }
.geom button { justify-content: flex-start; gap: 7px; }
.geom button .caret { margin-left: 4px; }

.modify { width: 299px; }
.modify .body { gap: 15px; padding: 5px 0 0 7px; }
.grid-big { display: grid; grid-template-columns: repeat(4, 38px); gap: 6px 11px; }
.grid-small { display: grid; grid-template-columns: repeat(3, 20px); gap: 11px; }

.measure { width: 70px; }
.measure .body { flex-direction: column; gap: 6px; padding: 5px 0 0 7px; }
.measure button { gap: 10px; }

.create { width: 55px; }
.create .body { flex-direction: column; gap: 6px; padding: 5px 0 0 7px; }

.ctx h2 { background: #e5efd8; border-left: 1px solid #f4f5f4; border-right: 3px solid #f4f5f4; }
.mode { width: 106px; margin-left: 4px; padding-left: 1px; }
.mode .tall { width: 50px; }
.plane { width: 135px; }
.plane .tall { width: 74px; }
.plane .tall:last-child { width: 58px; }
.plane .rule { height: 90px; margin: 0 1px; background: #ccc; }
.place { width: 104px; }
.place .body { flex-direction: column; align-items: stretch; gap: 1px; padding: 20px 4px 0 2px; }
.place button { justify-content: flex-start; gap: 7px; height: 27px; padding-left: 4px; border: 1px solid #ddd; color: #b4b4b4; }
.place .on { background: #c9e0f2; color: #8a9aa8; }
.family { width: 140px; }
.family .tall { width: 55px; }
.family .tall:last-child { width: 80px; }
.family h2 { background: #c5c9e2; }

/* Options bar */
.options { display: flex; align-items: center; flex: none; height: 30px; background: #e5efd8; }
.context { width: 109px; padding: 3px 0 0 12px; color: #a4a4a4; }
.options label { padding: 3px 4px 0 17px; border-left: 1px solid #999; }
.options input { width: 120px; height: 28px; margin-top: 2px; padding: 0 3px 3px; border: 1px solid #555; border-bottom: 0; background: #fff; }

/* Workspace */
.workspace { flex: 1; min-height: 0; display: grid; grid-template-columns: 282px minmax(0, 1fr) 215px; }

.palette-head { display: flex; align-items: center; justify-content: space-between; flex: none; height: 27px; padding: 0 5px 0 4px; background: #bccbdb; font-size: 14px; }

.properties, .browser { display: flex; flex-direction: column; min-height: 0; }
.properties { padding: 0 6px 2px 1px; border-right: 1px solid #777; }
.palette-box { flex: 1; display: flex; flex-direction: column; margin-top: 2px; border-top: 2px solid #777; border-left: 2px solid #888; border-right: 1px solid #ddd; }

.type { display: flex; align-items: center; justify-content: space-between; height: 89px; margin-bottom: 1px; padding: 0 2px 0 3px; border: 1px solid #e2e2e2; }
.thumb { display: flex; justify-content: center; width: 82px; height: 82px; padding: 7px 0 0; border: 1px solid #ddd; background: #eee; }

.filter { display: flex; gap: 6px; height: 28px; }
.filter select { width: 176px; height: 27px; padding: 0 22px 0 4px; border: 1px solid #aaa; border-radius: 0; appearance: none; background: url("data:image/svg+xml,%3Csvg xmlns='http://www.w3.org/2000/svg' width='10' height='6'%3E%3Cpath d='M1 1l4 4 4-4' fill='none' stroke='%23555'/%3E%3C/svg%3E") right 5px center no-repeat #e0dfe0; }
.filter button { gap: 4px; height: 23px; color: #a8a8a8; }

table { width: 100%; table-layout: fixed; border-collapse: collapse; background: #fdfdfd; }
tr { height: 24px; }
th, td { height: 24px; padding: 0 2px 1px; border: 1px dotted #888; border-left: 0; font-weight: 400; text-align: left; line-height: 20px; white-space: nowrap; }
tr:not(.group) th { width: 128px; padding-left: 10px; }
td:last-child { width: 15px; padding: 0 0 0 1px; }
.group { background: #dedddf; }
.group th, .group td { border: 0; }
.group th { width: 257px; padding-left: 2px; }
.readonly { color: #777; }
table input { width: 100%; height: 21px; padding: 0 0 1px; border: 0; background: none; display: block; }
.focus { outline: 1px solid #000; outline-offset: -1px; }
table input[type="checkbox"] { appearance: none; width: 16px; height: 16px; margin-left: 1px; padding: 0; border: 1px solid #222; background: #fff; }
table input[type="checkbox"]:checked::before { content: ""; display: block; width: 11px; height: 6px; margin: 2px 1px; border: solid #444; border-width: 0 0 2px 2px; rotate: -45deg; }
td:last-child button { width: 13px; height: 22px; background: #dedddf; border: 1px solid #b4b4b4; border-width: 1px 2px 2px 1px; }
.edit { padding: 0 0 0 1px; }
.edit button { width: 100%; height: 22px; background: #dedddf; border: solid #aaa; border-width: 1px 2px 2px 1px; }
.fold { display: block; width: 7px; height: 9px; margin: 0 0 4px 2px; }
.fold::before, .fold::after { content: ""; display: block; width: 4px; height: 4px; margin: 0 0 0 1px; border: solid #111; border-width: 1px 0 0 1px; rotate: 45deg; }
.blank { flex: 1; background: #fdfdfd; }
.actions { display: flex; align-items: center; justify-content: space-between; height: 32px; padding: 0 2px 3px; }
.actions a { color: #0a64c8; line-height: 18px; padding-bottom: 2px; }
.actions button { width: 98px; height: 24px; background: #c8c8c8; border: 1px solid #bbb; color: #888; }

/* Drawing view */
.view { display: grid; grid-template-columns: minmax(0, 1fr) 21px; grid-template-rows: minmax(0, 1fr) 24px; padding-right: 6px; }
.stage { position: relative; border: 1px solid #666; border-width: 1px 1px 0 0; border-right-color: #000; background: #fdfdfd; overflow: hidden; }
.drawing { width: 100%; height: 100%; overflow: hidden; }
.drawing .tag { fill: #111; font: 22px "Liberation Sans", "Noto Sans CJK SC", sans-serif; }
.drawing .dim { fill: #0a3fb5; font: 13px "Liberation Sans", sans-serif; }

.doc-controls { position: absolute; top: 9px; right: 3px; display: flex; gap: 6px; }
.navbar { position: absolute; top: 28px; right: 0; width: 35px; display: flex; flex-direction: column; align-items: center; padding: 2px 0; border: 2px solid #bbb; border-radius: 6px; background: #f1f1f1cc; }
.navbar .end { align-self: flex-end; margin-right: 1px; }
.navbar button { margin: 7px 0 5px; }
.navbar hr { width: 26px; margin: 3px 0 0; border: 0; border-top: 1px solid #bbb; }
.navbar .caret { margin-bottom: 1px; }
.navbar .end:last-child { margin-top: 8px; }

.vscroll { display: flex; flex-direction: column; align-items: center; padding: 8px 0 6px; }
.vscroll .grab { width: 19px; height: 21px; }
.grab { flex: none; background: #cbcbcb; }
.before { flex: 49; }
.after { flex: 49; }

.viewbar { display: flex; align-items: center; gap: 8px; padding: 0 6px 2px 0; }
.scale { width: 99px; padding-left: 31px; font: 14px/20px "Liberation Mono", monospace; white-space: nowrap; }
.viewbar .chev { margin-left: 2px; }
.hscroll { flex: 1; display: flex; }
.hscroll .grab { width: 21px; height: 19px; }
.grip { display: flex; align-items: center; justify-content: center; }

/* Project browser */
.browser { padding-bottom: 2px; }
.tree { flex: 1; margin-top: 2px; list-style: none; border: solid #666; border-width: 2px 0 0 2px; background: #fdfdfd; }
.tree li { display: flex; align-items: center; height: 22px; }
.tree i {
  --v: repeating-linear-gradient(#999 0 1px, transparent 1px 2px);
  --h: repeating-linear-gradient(90deg, #999 0 1px, transparent 1px 2px);
  flex: none;
  display: flex;
  align-items: center;
  justify-content: center;
  width: 26px;
  height: 22px;
  background-repeat: no-repeat;
}
.tree .c0 { width: 24px; }
.tree .line { background-image: var(--v); background-size: 1px 22px; background-position: 12px 0; }
.tree .dash { background-image: var(--h); background-size: 14px 1px; background-position: 12px 11px; }
.tree .line.dash { background-image: var(--v), var(--h); background-size: 1px 22px, 14px 1px; background-position: 12px 0, 12px 11px; }
.tree .up.dash { background-image: var(--v), var(--h); background-size: 1px 11px, 14px 1px; background-position: 12px 0, 12px 11px; }
.tree .down.dash { background-image: var(--v), var(--h); background-size: 1px 11px, 14px 1px; background-position: 12px 11px, 12px 11px; }
.tree b { width: 13px; height: 13px; border: 1px solid #999; background: linear-gradient(#2f4f90, #2f4f90) center / 9px 1px no-repeat #f4f4f4; }
.tree .plus { background: linear-gradient(#2f4f90, #2f4f90) center / 9px 1px no-repeat, linear-gradient(#2f4f90, #2f4f90) center / 1px 9px no-repeat #f4f4f4; }
.tree span { padding: 0 3px 2px; white-space: nowrap; }
.tree .branch { padding-left: 9px; }
.tree .leaf { margin-left: 6px; }
.tree .current { background: #dcdcdc; font-weight: 700; }
```
